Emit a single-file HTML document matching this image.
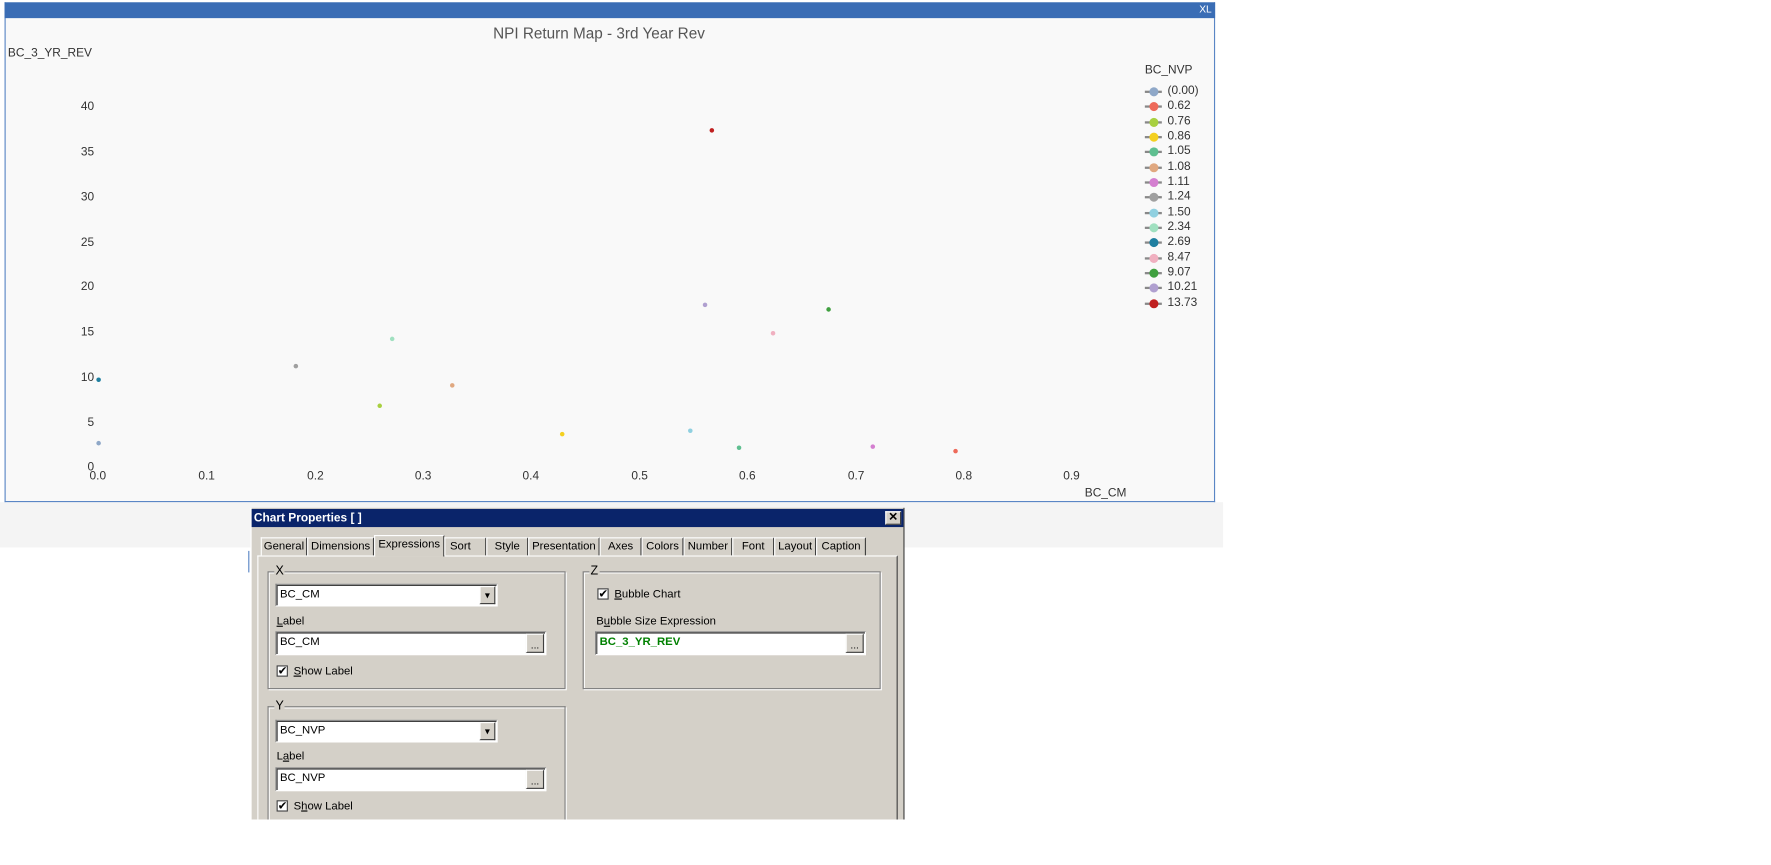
<!DOCTYPE html>
<html><head><meta charset="utf-8"><style>
html,body{margin:0;padding:0;background:#fff;width:1771px;height:855px;overflow:hidden}
#w{position:absolute;left:0;top:0;width:1560px;height:753px;transform:scale(1.1335);transform-origin:0 0;font-family:"Liberation Sans",sans-serif}
.a{position:absolute}
.t{position:absolute;font-size:10.5px;color:#333;white-space:nowrap}
.yt{position:absolute;font-size:10.5px;color:#333;width:30px;text-align:right;left:53px}
.xt{position:absolute;font-size:10.5px;color:#333;top:414px}
.pt{position:absolute;width:4px;height:4px;border-radius:50%}
.li{position:absolute;left:1010px;width:15px;height:2px;background:#888}
.li b{position:absolute;left:4px;top:-3px;width:8px;height:8px;border-radius:50%}
.lt{position:absolute;left:1030px;font-size:10.5px;color:#333}
.d{font-family:"Liberation Sans",sans-serif;font-size:10px;color:#000}
.tab{position:absolute;top:474px;height:16px;background:#d4d0c8;border-top:1px solid #fff;border-left:1px solid #fff;border-right:1px solid #404040;font-size:10px;line-height:16px;text-align:center;box-sizing:border-box}
.grp{position:absolute;border:1px solid #808080;box-shadow:1px 1px 0 #fff, inset 1px 1px 0 #fff}
.inp{position:absolute;background:#fff;border-top:1px solid #808080;border-left:1px solid #808080;border-right:1px solid #fff;border-bottom:1px solid #fff;box-shadow:inset 1px 1px 0 #404040;font-size:10px;line-height:17px;padding-left:3px;box-sizing:border-box}
.btn{position:absolute;background:#d4d0c8;border-top:1px solid #fff;border-left:1px solid #fff;border-right:1px solid #404040;border-bottom:1px solid #404040;box-sizing:border-box;font-size:9px;text-align:center}
.cb{position:absolute;width:10px;height:10px;background:#fff;border:1px solid #404040;font-size:10px;line-height:10px;text-align:center;box-sizing:border-box}
</style></head><body><div id="w">
<div class="a" style="left:0;top:443px;width:1079px;height:40px;background:#f4f4f4"></div>
<div class="a" style="left:4px;top:2px;width:1066px;height:440px;background:#f9f9f9;border:1px solid #5a86c5;border-top:none"></div>
<div class="a" style="left:4px;top:2px;width:1068px;height:14px;background:#3a6db5"></div>
<div class="t" style="left:1058px;top:3px;color:#fff;font-size:9px">XL</div>
<div class="t" style="left:435px;top:22px;font-size:13.5px;color:#555">NPI Return Map - 3rd Year Rev</div>
<div class="t" style="left:7px;top:41px">BC_3_YR_REV</div>
<div class="yt" style="top:88px">40</div><div class="yt" style="top:128px">35</div><div class="yt" style="top:168px">30</div><div class="yt" style="top:208px">25</div><div class="yt" style="top:247px">20</div><div class="yt" style="top:287px">15</div><div class="yt" style="top:327px">10</div><div class="yt" style="top:367px">5</div><div class="yt" style="top:406px">0</div>
<div class="xt" style="left:79px">0.0</div><div class="xt" style="left:175px">0.1</div><div class="xt" style="left:271px">0.2</div><div class="xt" style="left:366px">0.3</div><div class="xt" style="left:461px">0.4</div><div class="xt" style="left:557px">0.5</div><div class="xt" style="left:652px">0.6</div><div class="xt" style="left:748px">0.7</div><div class="xt" style="left:843px">0.8</div><div class="xt" style="left:938px">0.9</div>
<div class="t" style="left:957px;top:429px">BC_CM</div>
<div class="t" style="left:1010px;top:56px">BC_NVP</div>
<div class="li" style="top:80px"><b style="background:#8fa8c8"></b></div><div class="lt" style="top:74px">(0.00)</div>
<div class="li" style="top:93px"><b style="background:#ee6a5a"></b></div><div class="lt" style="top:87px">0.62</div>
<div class="li" style="top:107px"><b style="background:#a8d040"></b></div><div class="lt" style="top:101px">0.76</div>
<div class="li" style="top:120px"><b style="background:#f4d020"></b></div><div class="lt" style="top:114px">0.86</div>
<div class="li" style="top:133px"><b style="background:#5fbf90"></b></div><div class="lt" style="top:127px">1.05</div>
<div class="li" style="top:147px"><b style="background:#e0a880"></b></div><div class="lt" style="top:141px">1.08</div>
<div class="li" style="top:160px"><b style="background:#d47fd0"></b></div><div class="lt" style="top:154px">1.11</div>
<div class="li" style="top:173px"><b style="background:#a0a0a0"></b></div><div class="lt" style="top:167px">1.24</div>
<div class="li" style="top:187px"><b style="background:#90d0e0"></b></div><div class="lt" style="top:181px">1.50</div>
<div class="li" style="top:200px"><b style="background:#a0e0c0"></b></div><div class="lt" style="top:194px">2.34</div>
<div class="li" style="top:213px"><b style="background:#1f7fa0"></b></div><div class="lt" style="top:207px">2.69</div>
<div class="li" style="top:227px"><b style="background:#f0b0c0"></b></div><div class="lt" style="top:221px">8.47</div>
<div class="li" style="top:240px"><b style="background:#40a040"></b></div><div class="lt" style="top:234px">9.07</div>
<div class="li" style="top:253px"><b style="background:#b0a0d0"></b></div><div class="lt" style="top:247px">10.21</div>
<div class="li" style="top:267px"><b style="background:#c02020"></b></div><div class="lt" style="top:261px">13.73</div>
<div class="pt" style="left:626px;top:113px;background:#c02020"></div>
<div class="pt" style="left:620px;top:267px;background:#b0a0d0"></div>
<div class="pt" style="left:729px;top:271px;background:#40a040"></div>
<div class="pt" style="left:680px;top:292px;background:#f0b0c0"></div>
<div class="pt" style="left:344px;top:297px;background:#a0e0c0"></div>
<div class="pt" style="left:259px;top:321px;background:#a0a0a0"></div>
<div class="pt" style="left:85px;top:333px;background:#1f7fa0"></div>
<div class="pt" style="left:397px;top:338px;background:#e0a880"></div>
<div class="pt" style="left:333px;top:356px;background:#a8d040"></div>
<div class="pt" style="left:494px;top:381px;background:#f4d020"></div>
<div class="pt" style="left:607px;top:378px;background:#90d0e0"></div>
<div class="pt" style="left:85px;top:389px;background:#8fa8c8"></div>
<div class="pt" style="left:650px;top:393px;background:#5fbf90"></div>
<div class="pt" style="left:768px;top:392px;background:#d47fd0"></div>
<div class="pt" style="left:841px;top:396px;background:#ee6a5a"></div>
<div class="a" style="left:219px;top:486px;width:1px;height:19px;background:#5a86c5"></div>
<div class="a d" style="left:221px;top:448px;width:577px;height:275px;background:#d4d0c8;border-left:1px solid #fff;border-right:1px solid #404040;box-sizing:border-box"></div>
<div class="a d" style="left:222px;top:449px;width:575px;height:16px;background:#0a246a;color:#fff;font-weight:bold;font-size:10.5px;line-height:16px;padding-left:2px;box-sizing:border-box">Chart Properties [ ]</div>
<div class="btn" style="left:781px;top:451px;width:14px;height:12px;line-height:10px;font-size:10px;font-weight:bold">✕</div>
<div class="a" style="left:227px;top:490px;width:565px;height:240px;border-left:1px solid #fff;border-top:1px solid #fff;border-right:1px solid #404040;box-sizing:border-box"></div>
<div class="tab d" style="left:230px;width:41px">General</div>
<div class="tab d" style="left:271px;width:59px">Dimensions</div>
<div class="tab d" style="left:330px;width:62px;top:472px;height:19px;border-bottom:none">Expressions</div>
<div class="tab d" style="left:392px;width:37px;text-align:left;padding-left:4px">Sort</div>
<div class="tab d" style="left:429px;width:37px">Style</div>
<div class="tab d" style="left:466px;width:63px">Presentation</div>
<div class="tab d" style="left:529px;width:37px">Axes</div>
<div class="tab d" style="left:566px;width:37px">Colors</div>
<div class="tab d" style="left:603px;width:43px">Number</div>
<div class="tab d" style="left:646px;width:37px">Font</div>
<div class="tab d" style="left:683px;width:37px">Layout</div>
<div class="tab d" style="left:720px;width:44px">Caption</div>
<div class="grp" style="left:236px;top:504px;width:261px;height:102px"></div>
<div class="a d" style="left:242px;top:498px;background:#d4d0c8;padding:0 1px;font-size:11px">X</div>
<div class="inp d" style="left:243px;top:515px;width:196px;height:20px">BC_CM</div>
<div class="btn" style="left:423px;top:517px;width:14px;height:16px;line-height:14px">▾</div>
<div class="a d" style="left:244px;top:543px"><u>L</u>abel</div>
<div class="inp d" style="left:243px;top:557px;width:239px;height:21px">BC_CM</div>
<div class="btn" style="left:464px;top:559px;width:16px;height:17px;line-height:18px">...</div>
<div class="cb" style="left:244px;top:587px">✔</div>
<div class="a d" style="left:259px;top:587px"><u>S</u>how Label</div>
<div class="grp" style="left:514px;top:504px;width:261px;height:102px"></div>
<div class="a d" style="left:520px;top:498px;background:#d4d0c8;padding:0 1px;font-size:11px">Z</div>
<div class="cb" style="left:527px;top:519px">✔</div>
<div class="a d" style="left:542px;top:519px"><u>B</u>ubble Chart</div>
<div class="a d" style="left:526px;top:543px">B<u>u</u>bble Size Expression</div>
<div class="inp d" style="left:525px;top:557px;width:239px;height:21px;color:#008000;font-weight:bold">BC_3_YR_REV</div>
<div class="btn" style="left:746px;top:559px;width:16px;height:17px;line-height:18px">...</div>
<div class="grp" style="left:236px;top:623px;width:261px;height:110px;border-bottom:none"></div>
<div class="a" style="left:221px;top:723px;width:578px;height:40px;background:#fff"></div>
<div class="a d" style="left:242px;top:617px;background:#d4d0c8;padding:0 1px;font-size:11px">Y</div>
<div class="inp d" style="left:243px;top:635px;width:196px;height:20px">BC_NVP</div>
<div class="btn" style="left:423px;top:637px;width:14px;height:16px;line-height:14px">▾</div>
<div class="a d" style="left:244px;top:662px">L<u>a</u>bel</div>
<div class="inp d" style="left:243px;top:677px;width:239px;height:21px">BC_NVP</div>
<div class="btn" style="left:464px;top:679px;width:16px;height:17px;line-height:18px">...</div>
<div class="cb" style="left:244px;top:706px">✔</div>
<div class="a d" style="left:259px;top:706px">S<u>h</u>ow Label</div>
</div></body></html>
